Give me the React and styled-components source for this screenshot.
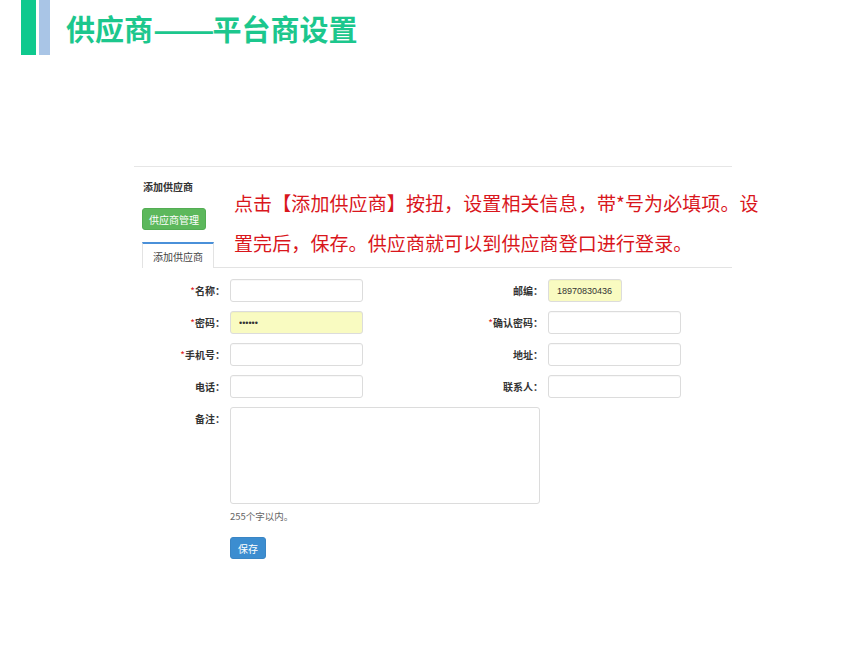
import React from "react";
import styled, { createGlobalStyle } from "styled-components";

const Global = createGlobalStyle`
  html, body { margin: 0; padding: 0; background: #fff; }
  body {
    width: 860px; height: 645px; overflow: hidden;
    font-family: "Noto Sans CJK SC", "Noto Sans", "Liberation Sans", sans-serif;
    color: #333;
  }
  * { box-sizing: border-box; }
`;

const Slide = styled.div`
  width: 860px;
  height: 645px;
  display: flex;
  flex-direction: column;
`;

const Header = styled.header`
  display: flex;
  align-items: stretch;
  height: 55px;
  padding-left: 21px;
`;

const Bar = styled.div`
  width: ${(p) => p.$w}px;
  background: ${(p) => p.$color};
  margin-right: ${(p) => p.$gap}px;
`;

const Title = styled.h1`
  margin: 0;
  align-self: center;
  font-size: 29px;
  line-height: 34px;
  font-weight: 700;
  color: #1cc78d;
  white-space: nowrap;
`;

const Dash = styled.span`
  display: inline-block;
  transform: scaleX(1.25);
  transform-origin: left center;
  margin-right: 10px;
`;

const Panel = styled.section`
  position: relative;
  margin: 111px 0 0 134px;
  width: 598px;
  border-top: 1px solid #e6e6e6;
  padding-left: 8px;
`;

const PanelTitle = styled.div`
  margin-top: 13px;
  padding-left: 1px;
  font-size: 10px;
  line-height: 14px;
  font-weight: 700;
  color: #333;
`;

const Button = styled.button`
  display: flex;
  align-items: center;
  justify-content: center;
  height: 22px;
  width: ${(p) => p.$w}px;
  padding: 0;
  border: 1px solid ${(p) => p.$border};
  border-radius: 3px;
  background: ${(p) => p.$bg};
  color: #fff;
  font-family: inherit;
  font-size: 10px;
  cursor: pointer;
`;

const ManageButton = styled(Button)`
  margin-top: 14px;
`;

const TabBar = styled.div`
  margin-top: 12px;
  display: flex;
  border-bottom: 1px solid #e3e3e3;
`;

const Tab = styled.div`
  width: 72px;
  height: 26px;
  margin-bottom: -1px;
  display: flex;
  align-items: center;
  justify-content: center;
  background: #fff;
  border-top: 2px solid #4a90d9;
  border-left: 1px solid #e3e3e3;
  border-right: 1px solid #e3e3e3;
  font-size: 10px;
  color: #444;
`;

const Form = styled.div`
  margin-top: 11px;
  display: grid;
  grid-template-columns: 80px 133px 169px 133px;
  column-gap: 8px;
  row-gap: 9px;
  align-items: center;
`;

const Label = styled.label`
  text-align: right;
  font-size: 10px;
  line-height: 14px;
  font-weight: 700;
  color: #333;
  white-space: nowrap;
  align-self: ${(p) => (p.$top ? "start" : "center")};
  padding-top: ${(p) => (p.$top ? "5px" : "0")};
  margin-right: -3px;
`;

const Star = styled.span`
  color: #e02020;
  font-weight: 400;
`;

const Input = styled.input`
  height: 23px;
  width: ${(p) => (p.$w ? `${p.$w}px` : "100%")};
  border: 1px solid #dcdcdc;
  border-radius: 3px;
  background: ${(p) => (p.$fill ? "#f9fbc1" : "#fff")};
  box-shadow: inset 0 1px 1px rgba(0, 0, 0, 0.03);
  padding: 0 0 0 8px;
  font-family: "Liberation Sans", "Noto Sans", sans-serif;
  font-size: 9px;
  color: #333;
  outline: none;
`;

const TextArea = styled.textarea`
  grid-column: 2 / 4;
  width: 310px;
  height: 97px;
  border: 1px solid #dcdcdc;
  border-radius: 3px;
  resize: none;
  outline: none;
  background: #fff;
`;

const Below = styled.div`
  grid-column: 2 / 5;
  display: flex;
  flex-direction: column;
  align-items: flex-start;
  margin-top: -4px;
`;

const Hint = styled.div`
  font-size: 9.5px;
  line-height: 14px;
  color: #666;
`;

const SaveButton = styled(Button)`
  margin-top: 14px;
`;

const Note = styled.p`
  position: absolute;
  left: 100px;
  top: 16px;
  margin: 0;
  font-size: 19px;
  line-height: 40px;
  color: #d9161c;
  white-space: nowrap;
  letter-spacing: 0.1px;
`;

const Req = ({ children }) => (
  <>
    <Star>*</Star>
    {children}
  </>
);

export default function App() {
  return (
    <Slide>
      <Global />
      <Header>
        <Bar $w={15} $gap={3} $color="#0fc98e" />
        <Bar $w={11} $gap={16} $color="#a9c5e6" />
        <Title>
          供应商<Dash>——</Dash>平台商设置
        </Title>
      </Header>
      <Panel>
        <PanelTitle>添加供应商</PanelTitle>
        <ManageButton $w={64} $bg="#5cb85c" $border="#53ad53">
          供应商管理
        </ManageButton>
        <TabBar>
          <Tab>添加供应商</Tab>
        </TabBar>
        <Form>
          <Label>
            <Req>名称：</Req>
          </Label>
          <Input />
          <Label>邮编：</Label>
          <Input $w={74} $fill defaultValue="18970830436" />

          <Label>
            <Req>密码：</Req>
          </Label>
          <Input $fill type="password" defaultValue="123456" />
          <Label>
            <Req>确认密码：</Req>
          </Label>
          <Input type="password" />

          <Label>
            <Req>手机号：</Req>
          </Label>
          <Input />
          <Label>地址：</Label>
          <Input />

          <Label>电话：</Label>
          <Input />
          <Label>联系人：</Label>
          <Input />

          <Label $top>备注：</Label>
          <TextArea />
          <div />

          <div />
          <Below>
            <Hint>255个字以内。</Hint>
            <SaveButton $w={36} $bg="#3c8dd0" $border="#3a85c4">
              保存
            </SaveButton>
          </Below>
        </Form>
        <Note>
          点击【添加供应商】按扭，设置相关信息，带*号为必填项。设
          <br />
          置完后，保存。供应商就可以到供应商登口进行登录。
        </Note>
      </Panel>
    </Slide>
  );
}
